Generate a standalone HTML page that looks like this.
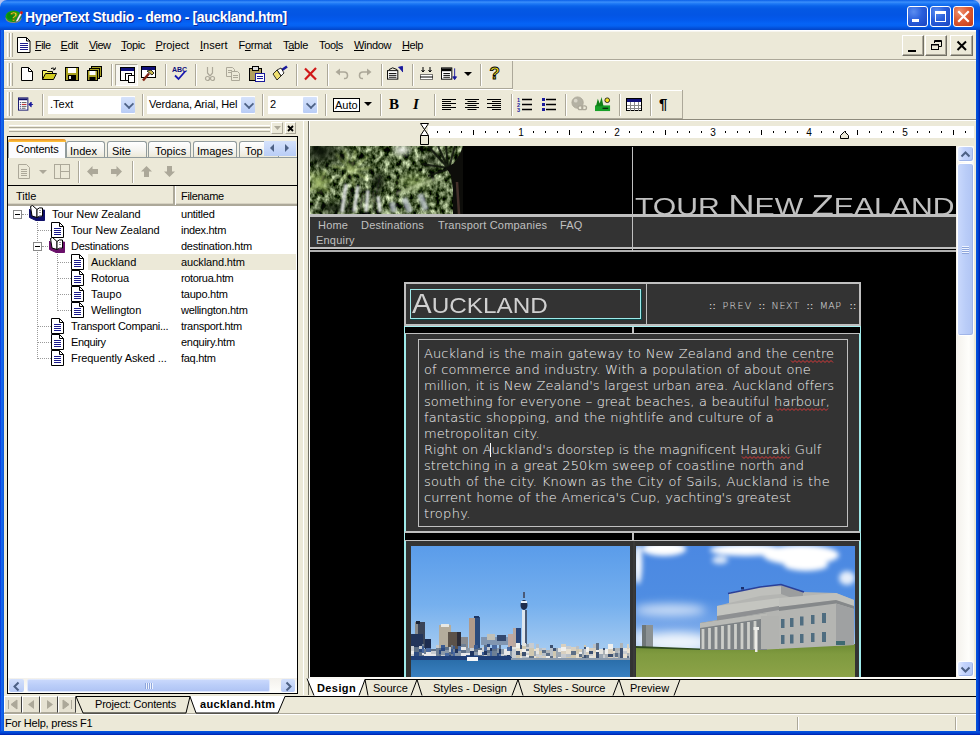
<!DOCTYPE html>
<html lang="en">
<head>
<meta charset="utf-8">
<title>HyperText Studio - demo - [auckland.htm]</title>
<style>
*{box-sizing:border-box;margin:0;padding:0}
html,body{width:980px;height:735px;overflow:hidden;background:#ece9d8}
body{position:relative;font:11px "Liberation Sans",sans-serif;color:#000}
#win{position:absolute;left:0;top:0;width:980px;height:735px;overflow:hidden;background:#ece9d8}
#win div,#win span,#win svg,#win i,#win b{position:absolute;white-space:nowrap}
#win u{text-decoration:underline;text-underline-offset:1px}
svg{overflow:visible}
/* title bar */
#title{left:0;top:0;width:980px;height:30px;border-radius:7px 7px 0 0;
background:linear-gradient(to bottom,#0a5fe8 0%,#3b8ffb 7%,#1f7af6 12%,#0a63ea 20%,#0458e4 30%,#0355e4 50%,#0359ec 65%,#0563f6 78%,#0562f2 86%,#0352dd 93%,#0345c6 100%)}
#title .txt{left:25px;top:9px;font:bold 14px/16px "Liberation Sans",sans-serif;color:#fff;letter-spacing:-.37px;text-shadow:1px 1px 0 #0a2a9a}
#bl{left:0;top:30px;width:4px;height:705px;background:linear-gradient(to right,#0831d9,#166aee 40%,#0855dd)}
#br{left:976px;top:30px;width:4px;height:705px;background:linear-gradient(to right,#0855dd,#0046d5 50%,#001dab)}
#bb{left:0;top:731px;width:980px;height:4px;background:linear-gradient(to bottom,#0855dd,#0046d5 50%,#001dab)}
.cb{top:6px;width:21px;height:21px;border:1px solid #fff;border-radius:3px;background:radial-gradient(circle at 30% 25%,#5b8df0,#2a5fdc 45%,#1a44c0 100%)}
.cb.x{background:radial-gradient(circle at 30% 25%,#f0926f,#dd5a33 45%,#c23a17 100%)}
/* generic chrome */
.grip{width:6px;background:linear-gradient(to right,#fff 0 1px,#ece9d8 1px 2px,#aca899 2px 3px,#fff 3px 4px,#ece9d8 4px 5px,#aca899 5px 6px)}
.hl{height:2px;border-top:1px solid #aca899;border-bottom:1px solid #fff}
.vs{width:2px;border-left:1px solid #aca899;border-right:1px solid #fff}
.m{top:39px;font:11px/13px "Liberation Sans",sans-serif}
.mb{top:35px;width:22px;height:21px;background:#ece9d8;border:1px solid;border-color:#fff #716f64 #716f64 #fff;box-shadow:inset -1px -1px 0 #aca899}
.ic{width:16px;height:16px}
.combo{background:#fff;height:18px;top:96px}
.combo span{left:2px;top:2px;font:11px/13px "Liberation Sans",sans-serif}
.dd{width:14px;height:16px;top:1px;background:linear-gradient(to bottom,#d5e2fb,#b9cdf6);border-radius:1px}
.dd:after{content:"";position:absolute;left:4px;top:3px;width:6px;height:6px;border-right:2px solid #4d6185;border-bottom:2px solid #4d6185;transform:rotate(45deg) scale(.9);transform-origin:50% 50%}
</style>
</head>
<body>
<div id="win">
<div style="left:0;top:0;width:8px;height:8px;background:#b4c2f0"></div><div style="left:972px;top:0;width:8px;height:8px;background:#b4c2f0"></div>
<div id="title">
<svg style="left:5px;top:9px" width="19" height="15" viewBox="0 0 19 15"><ellipse cx="8.500" cy="9.500" rx="8" ry="4.600" fill="#8a8c7a"/><ellipse cx="8.500" cy="7.300" rx="8" ry="5.800" fill="#14a014"/><ellipse cx="5" cy="7" rx="3" ry="3.500" fill="#0a8a10"/><text x="4.500" y="12" font-family="Liberation Sans,sans-serif" font-weight="bold" font-size="13" fill="#f4f030" stroke="#4a4a00" stroke-width=".5">?</text><path d="M11 11.500L16 2L18 3.200L13 12.500L10.500 13Z" fill="#f4f4f4" stroke="#333" stroke-width=".5"/><path d="M14.800 4.300L16 2L18 3.200L16.700 5.500Z" fill="#d21414"/></svg>
<span class="txt">HyperText Studio - demo - [auckland.htm]</span>
<div class="cb" style="left:907px"><div style="left:4px;top:12px;width:7px;height:3px;background:#fff"></div></div>
<div class="cb" style="left:930px"><div style="left:4px;top:4px;width:11px;height:11px;border:1px solid #fff;border-top-width:3px"></div></div>
<div class="cb x" style="left:953px"><svg style="left:0;top:0" width="19" height="19"><path d="M5 5L14 14M14 5L5 14" stroke="#fff" stroke-width="2.2" stroke-linecap="square"/></svg></div>
</div>
<div id="bl"></div><div id="br"></div><div id="bb"></div>
<!-- menu bar -->
<div style="left:4px;top:30px;width:972px;height:1px;background:#fff"></div><div style="left:4px;top:31px;width:972px;height:1px;background:#f7f5ee"></div>
<div class="grip" style="left:7px;top:33px;height:24px"></div>
<svg style="left:17px;top:37px" width="14" height="16" viewBox="0 0 14 16"><path d="M.5 .5H9.5L13 4V15.5H.5Z" fill="#fff" stroke="#000"/><path d="M9.5 .5V4H13" fill="none" stroke="#000"/><path d="M3 6.5H11M3 8.5H11M3 10.5H11M3 12.5H11" stroke="#1a1a8c"/></svg>
<span class="m" style="left:35px;letter-spacing:-0.56px"><u>F</u>ile</span>
<span class="m" style="left:60.5px;letter-spacing:-0.37px"><u>E</u>dit</span>
<span class="m" style="left:89px;letter-spacing:-0.59px"><u>V</u>iew</span>
<span class="m" style="left:121px;letter-spacing:-0.34px"><u>T</u>opic</span>
<span class="m" style="left:155.5px;letter-spacing:-0.11px"><u>P</u>roject</span>
<span class="m" style="left:200px;letter-spacing:-0.00px"><u>I</u>nsert</span>
<span class="m" style="left:238.5px;letter-spacing:-0.31px">F<u>o</u>rmat</span>
<span class="m" style="left:283px;letter-spacing:-0.26px">T<u>a</u>ble</span>
<span class="m" style="left:319px;letter-spacing:-0.34px">Too<u>l</u>s</span>
<span class="m" style="left:354px;letter-spacing:-0.35px"><u>W</u>indow</span>
<span class="m" style="left:402px;letter-spacing:-0.46px"><u>H</u>elp</span>
<div class="mb" style="left:902px"><div style="left:5px;top:14px;width:8px;height:2px;background:#000"></div></div>
<div class="mb" style="left:925px"><svg style="left:5px;top:4px" width="12" height="11"><path d="M3.5 3V.5H10.5V6.5H8" fill="none" stroke="#000"/><path d="M3 1.5H11" stroke="#000"/><rect x=".5" y="4.5" width="7" height="5" fill="none" stroke="#000"/><path d="M0 5H8" stroke="#000"/></svg></div>
<div class="mb" style="left:950px;width:23px"><svg style="left:5px;top:4px" width="12" height="11"><path d="M1.5 1.5L10 10M10 1.5L1.5 10" stroke="#000" stroke-width="2"/></svg></div>
<div class="hl" style="left:4px;top:59px;width:972px"></div>
<!-- toolbar 1 -->
<div class="grip" style="left:7px;top:63px;height:23px"></div>
<div style="left:4px;top:88px;width:509px;height:1px;background:#aca899"></div>
<div style="left:512px;top:61px;width:1px;height:28px;background:#aca899"></div>
<div style="left:4px;top:89px;width:509px;height:1px;background:#fff"></div>
<div style="left:513px;top:90px;width:170px;height:1px;background:#fff"></div>
<div style="left:4px;top:118px;width:679px;height:1px;background:#aca899"></div>
<div style="left:682px;top:90px;width:1px;height:29px;background:#aca899"></div>
<div style="left:4px;top:119px;width:972px;height:1px;background:#8d8a7c"></div>
<div style="left:4px;top:120px;width:972px;height:1px;background:#fff"></div>
<div id="tb1" style="left:0;top:0">
<!-- new -->
<svg class="ic" style="left:20px;top:66px" viewBox="0 0 16 16"><path d="M1.5 1.5H8.5L12.5 5.5V14.5H1.5Z" fill="#fff" stroke="#000"/><path d="M8.5 1.5V5.5H12.5" fill="none" stroke="#000"/></svg>
<!-- open -->
<svg class="ic" style="left:41px;top:66px" viewBox="0 0 16 16"><path d="M1.5 13.500V4.500H5.500L6.500 5.500H11.500V7.500" fill="#f0f060" stroke="#000"/><path d="M1.5 13.5L4.500 7.500H15.500L12.500 13.500Z" fill="#d0cc20" stroke="#000"/><path d="M10 2.500Q12.500 1 14 3.500M14 3.500L14.500 1.500M14 3.500L12 3.800" fill="none" stroke="#000"/></svg>
<!-- save -->
<svg class="ic" style="left:64px;top:66px" viewBox="0 0 16 16"><rect x="1.500" y="1.500" width="13" height="13" fill="#a8a020" stroke="#000"/><rect x="4" y="2" width="8" height="5" fill="#fff"/><rect x="4" y="9" width="8" height="5" fill="#000"/><rect x="5" y="10" width="2" height="3" fill="#ddd"/></svg>
<!-- save all -->
<svg class="ic" style="left:86px;top:66px" viewBox="0 0 16 16"><rect x="5.500" y=".5" width="10" height="10" fill="#a8a020" stroke="#000"/><rect x="3.500" y="2.500" width="10" height="10" fill="#a8a020" stroke="#000"/><rect x="1.500" y="4.500" width="10" height="10" fill="#a8a020" stroke="#000"/><rect x="3.500" y="5" width="6" height="4" fill="#fff"/><rect x="3.500" y="11" width="6" height="3" fill="#000"/></svg>
<div class="vs" style="left:111px;top:64px;height:22px"></div>
<!-- pressed button -->
<div style="left:115px;top:64px;width:23px;height:22px;background:#f7f6f1;border:1px solid;border-color:#aca899 #fff #fff #aca899"></div>
<svg class="ic" style="left:120px;top:67px" viewBox="0 0 16 16"><rect x=".5" y=".5" width="14" height="13" fill="#fff" stroke="#000"/><rect x="1" y="1" width="13" height="3" fill="#10107a"/><rect x="5.500" y="6.500" width="6" height="7" fill="#fff" stroke="#000"/><rect x="8.500" y="8.500" width="6" height="7" fill="#fff" stroke="#000"/></svg>
<!-- build -->
<svg class="ic" style="left:141px;top:66px" viewBox="0 0 16 16"><rect x=".5" y=".5" width="14" height="11" fill="#fff" stroke="#000"/><rect x="1" y="1" width="13" height="3" fill="#10107a"/><path d="M2 14.500L8 7.500" stroke="#802010" stroke-width="2.400"/><path d="M6 5L10 4L13 7L11 9Z" fill="#c8b850" stroke="#000" stroke-width=".8"/></svg>
<div class="vs" style="left:165px;top:64px;height:22px"></div>
<!-- spell -->
<svg class="ic" style="left:172px;top:65px" viewBox="0 0 16 16"><text x="0" y="7" font-family="Liberation Sans,sans-serif" font-size="7" font-weight="bold" fill="#10107a">ABC</text><path d="M3 10.500L6.500 14L13.500 6" fill="none" stroke="#1818b0" stroke-width="1.800"/></svg>
<div class="vs" style="left:195px;top:64px;height:22px"></div>
<!-- cut (disabled) -->
<svg class="ic" style="left:202px;top:66px" viewBox="0 0 16 16"><path d="M5.500 1V7L8 10M10.500 1V7L8 10" fill="none" stroke="#aca899" stroke-width="1.200"/><circle cx="5.500" cy="12.500" r="2" fill="none" stroke="#aca899" stroke-width="1.200"/><circle cx="10.500" cy="12.500" r="2" fill="none" stroke="#aca899" stroke-width="1.200"/></svg>
<!-- copy (disabled) -->
<svg class="ic" style="left:225px;top:66px" viewBox="0 0 16 16"><path d="M1.500 1.500H7.500L9.500 3.500V10.500H1.500Z" fill="#ece9d8" stroke="#aca899"/><path d="M6.500 5.500H12.500L14.500 7.500V14.500H6.500Z" fill="#ece9d8" stroke="#aca899"/><path d="M3 4.500H7M3 6.500H6M8 9.500H13M8 11.500H13" stroke="#aca899"/></svg>
<!-- paste -->
<svg class="ic" style="left:249px;top:66px" viewBox="0 0 16 16"><rect x=".5" y="2.500" width="12" height="12" fill="#b0a060" stroke="#000"/><rect x="3.500" y=".5" width="6" height="4" fill="#ddd" stroke="#000"/><rect x="6.500" y="7.500" width="9" height="8" fill="#fff" stroke="#1a1a9c"/><path d="M8 10.500H14M8 12.500H14" stroke="#1a1a9c"/></svg>
<!-- format painter -->
<svg class="ic" style="left:272px;top:66px" viewBox="0 0 16 16"><path d="M10 4L15 .5" stroke="#1a1a9c" stroke-width="2.600"/><path d="M5 4L9 2L12 7L9 10Z" fill="#fff" stroke="#000" stroke-width=".8"/><path d="M1 8L5 4L9 10L5 14Z" fill="#f0e070" stroke="#000" stroke-width=".8"/></svg>
<div class="vs" style="left:296px;top:64px;height:22px"></div>
<!-- delete -->
<svg class="ic" style="left:303px;top:66px" viewBox="0 0 16 16"><path d="M2 2.500L13 13.500M13 2L2 13.500" stroke="#d01818" stroke-width="2.200"/></svg>
<div class="vs" style="left:327px;top:64px;height:22px"></div>
<!-- undo/redo disabled -->
<svg class="ic" style="left:334px;top:66px" viewBox="0 0 16 16"><path d="M3 6H10Q13.500 6 13.500 9.500T10 12.500" fill="none" stroke="#aca899" stroke-width="1.600"/><path d="M1.500 6L6 2.500V9.500Z" fill="#aca899"/></svg>
<svg class="ic" style="left:357px;top:66px" viewBox="0 0 16 16"><path d="M13 6H6Q2.500 6 2.500 9.500T6 12.500" fill="none" stroke="#aca899" stroke-width="1.600"/><path d="M14.500 6L10 2.500V9.500Z" fill="#aca899"/></svg>
<div class="vs" style="left:381px;top:64px;height:22px"></div>
<!-- properties -->
<svg class="ic" style="left:387px;top:65px" viewBox="0 0 17 16"><rect x=".5" y="5.500" width="11" height="9" fill="#fff" stroke="#000"/><path d="M2 4.500L6 2.500L11 4.500" fill="none" stroke="#000"/><path d="M2 8.500H10M2 10.500H10M2 12.500H10" stroke="#000"/><path d="M12 2L16.500 1V7" fill="#1a1a9c" stroke="#1a1a9c"/></svg>
<div class="vs" style="left:412px;top:64px;height:22px"></div>
<svg class="ic" style="left:419px;top:66px" viewBox="0 0 16 16"><path d="M4 1V6M4 6L2.500 4M4 6L5.500 4M11 1V6M11 6L9.500 4M11 6L12.500 4" stroke="#000" fill="none"/><rect x="1.500" y="8.500" width="12" height="5" fill="#fff" stroke="#000" stroke-dasharray="1 1"/><path d="M1 11H14" stroke="#000"/></svg>
<svg class="ic" style="left:441px;top:66px" viewBox="0 0 17 16"><rect x=".5" y="1.500" width="11" height="12" fill="#fff" stroke="#000"/><rect x="1" y="2" width="10" height="3" fill="#000"/><path d="M2.500 7.500H9.500M2.500 9.500H9.500M2.500 11.500H9.500" stroke="#000"/><path d="M14.500 2V13M14.500 14L12.500 11H16.500Z" stroke="#1a1a9c" fill="#1a1a9c"/></svg>
<svg style="left:464px;top:72px" width="8" height="5"><path d="M0 0H8L4 4Z" fill="#000"/></svg>
<div class="vs" style="left:480px;top:64px;height:22px"></div>
<!-- help -->
<svg class="ic" style="left:487px;top:65px" viewBox="0 0 16 16"><text x="2.500" y="14" font-family="Liberation Sans,sans-serif" font-size="17" font-weight="bold" fill="#f0e020" stroke="#000" stroke-width=".9">?</text></svg>
</div>
<!-- toolbar 2 -->
<div class="grip" style="left:7px;top:92px;height:24px"></div>
<svg class="ic" style="left:18px;top:96px" viewBox="0 0 17 16"><rect x=".5" y="1.500" width="10" height="13" fill="#fff" stroke="#10106a"/><rect x="1" y="2" width="9" height="2" fill="#10106a"/><path d="M2 6.500H3M2 8.500H3M2 10.500H3M2 12.500H3" stroke="#10106a"/><path d="M4 6.500H9M4 10.500H9M4 12.500H8" stroke="#555"/><path d="M4 8.500H9" stroke="#c02020"/><path d="M16 8.500H12M11.500 8.500L14 6V11Z" stroke="#1a1a9c" fill="#1a1a9c"/></svg>
<div class="vs" style="left:42px;top:94px;height:22px"></div>
<div class="combo" style="left:48px;width:87px"><span>.Text</span><div class="dd" style="left:73px"></div></div>
<div class="vs" style="left:142px;top:94px;height:22px"></div>
<div class="combo" style="left:147px;width:108px"><span style="letter-spacing:-.15px">Verdana, Arial, Hel</span><div class="dd" style="left:94px"></div></div>
<div class="vs" style="left:262px;top:94px;height:22px"></div>
<div class="combo" style="left:268px;width:50px"><span>2</span><div class="dd" style="left:35px"></div></div>
<div class="vs" style="left:325px;top:94px;height:22px"></div>
<div style="left:333px;top:98px;width:27px;height:14px;border:1px solid #000;background:#fff"><span style="left:1px;top:0;font:11px/13px 'Liberation Sans',sans-serif">Auto</span></div>
<svg style="left:364px;top:102px" width="8" height="5"><path d="M0 0H8L4 4Z" fill="#000"/></svg>
<div class="vs" style="left:380px;top:94px;height:22px"></div>
<span style="left:389px;top:96px;font:bold 15px/17px 'Liberation Serif',serif">B</span>
<span style="left:413px;top:96px;font:italic bold 15px/17px 'Liberation Serif',serif">I</span>
<div class="vs" style="left:434px;top:94px;height:22px"></div>
<svg class="ic" style="left:442px;top:97px" viewBox="0 0 16 16"><path d="M0 2.500H14M0 4.500H9M0 6.500H14M0 8.500H9M0 10.500H14M0 12.500H9" stroke="#000"/></svg>
<svg class="ic" style="left:465px;top:97px" viewBox="0 0 16 16"><path d="M0 2.500H14M2.500 4.500H11.500M0 6.500H14M2.500 8.500H11.500M0 10.500H14M2.500 12.500H11.500" stroke="#000"/></svg>
<svg class="ic" style="left:487px;top:97px" viewBox="0 0 16 16"><path d="M0 2.500H14M5 4.500H14M0 6.500H14M5 8.500H14M0 10.500H14M5 12.500H14" stroke="#000"/></svg>
<div class="vs" style="left:511px;top:94px;height:22px"></div>
<svg class="ic" style="left:517px;top:97px" viewBox="0 0 16 16"><path d="M5 2.500H15M5 7.500H15M5 12.500H15" stroke="#000" stroke-width="1.400"/><text x="0" y="5" font-family="Liberation Sans,sans-serif" font-size="5.500" font-weight="bold" fill="#1a1a9c">1</text><text x="0" y="10" font-family="Liberation Sans,sans-serif" font-size="5.500" font-weight="bold" fill="#1a1a9c">2</text><text x="0" y="15" font-family="Liberation Sans,sans-serif" font-size="5.500" font-weight="bold" fill="#1a1a9c">3</text></svg>
<svg class="ic" style="left:541px;top:97px" viewBox="0 0 16 16"><path d="M5 2.500H15M5 7.500H15M5 12.500H15" stroke="#000" stroke-width="1.400"/><rect x="1" y="1" width="3" height="3" fill="#1a1a9c"/><rect x="1" y="6" width="3" height="3" fill="#1a1a9c"/><rect x="1" y="11" width="3" height="3" fill="#1a1a9c"/></svg>
<div class="vs" style="left:565px;top:94px;height:22px"></div>
<svg class="ic" style="left:571px;top:96px" viewBox="0 0 17 17"><circle cx="7" cy="7" r="6" fill="#b4b1a3" stroke="#aca899"/><circle cx="5" cy="5" r="2" fill="#d8d5c8"/><rect x="7.500" y="10.500" width="5" height="4" rx="2" fill="#ece9d8" stroke="#aca899" stroke-width="1.400"/><rect x="11.500" y="10.500" width="5" height="4" rx="2" fill="none" stroke="#aca899" stroke-width="1.400"/></svg>
<svg class="ic" style="left:595px;top:96px" viewBox="0 0 17 17"><rect x="0" y="10" width="16" height="6" fill="#18a028"/><path d="M1 11L3 3L5 8L7 1L9 11Z" fill="#108018"/><circle cx="13" cy="4.500" r="2.500" fill="#f0e020" stroke="#000" stroke-width=".8"/><path d="M8 13H14" stroke="#000"/></svg>
<div class="vs" style="left:619px;top:94px;height:22px"></div>
<svg class="ic" style="left:626px;top:97px" viewBox="0 0 16 16"><rect x=".5" y="1.500" width="15" height="12" fill="#fff" stroke="#000"/><rect x="1" y="2" width="14" height="3" fill="#10107a"/><path d="M1 8.500H15M1 11.500H15M4.500 5V14M8.500 5V14M12.500 5V14" stroke="#888"/></svg>
<div class="vs" style="left:650px;top:94px;height:22px"></div>
<span style="left:659px;top:95px;font:bold 15px/18px 'Liberation Sans',sans-serif">¶</span>
<!-- left panel -->
<style>
.tab{top:141px;height:16px;background:linear-gradient(to bottom,#fff,#f4f3ee 60%,#ece9d8);border:1px solid #919b9c;border-bottom:0;border-radius:3px 3px 0 0;font:11px/13px "Liberation Sans",sans-serif;padding:3px 0 0 3px}
.tr{left:8px;width:289px;height:16px;font:11px/13px "Liberation Sans",sans-serif}
.tr span{top:2px}
.tr .f{left:173px}
.doc{width:13px;height:15px;top:0}
.dot{border-top:1px dotted #9a9a9a;height:1px}
.dotv{border-left:1px dotted #9a9a9a;width:1px}
</style>
<div style="left:9px;top:125px;width:261px;height:3px;border-top:1px solid #fff;border-bottom:1px solid #aca899"></div>
<div style="left:9px;top:129px;width:261px;height:3px;border-top:1px solid #fff;border-bottom:1px solid #aca899"></div>
<div style="left:271px;top:122px;width:12px;height:12px;border:1px solid;border-color:#fff #aca899 #aca899 #fff"><svg style="left:2px;top:3px" width="7" height="4"><path d="M0 0H7L3.500 4Z" fill="#aca899"/></svg></div>
<div style="left:285px;top:122px;width:11px;height:12px;border:1px solid;border-color:#fff #aca899 #aca899 #fff"><svg style="left:1px;top:2px" width="7" height="7"><path d="M1 1L6 6M6 1L1 6" stroke="#000" stroke-width="1.800"/></svg></div>
<div style="left:7px;top:136px;width:291px;height:558px;border:1px solid #000;background:#ece9d8"></div>
<div style="left:303px;top:121px;width:1px;height:574px;background:#fff"></div>
<div style="left:8px;top:137px;width:289px;height:21px;background:#f1efe2"></div>
<div style="left:8px;top:157px;width:289px;height:1px;background:#919b9c"></div>
<div class="tab" style="left:66px;width:39px">Index</div>
<div class="tab" style="left:107px;width:40px;padding-left:4px">Site</div>
<div class="tab" style="left:148px;width:43px;padding-left:6px">Topics</div>
<div class="tab" style="left:193px;width:44px">Images</div>
<div class="tab" style="left:239px;width:40px;padding-left:5px">Top</div>
<div class="tab" style="left:8px;top:139px;width:58px;height:19px;background:#fcfcfe;padding:4px 0 0 7px;border-top:0;letter-spacing:-.2px"><div style="left:-1px;top:0;width:58px;height:3px;background:linear-gradient(to bottom,#e68b2c,#ffc73c);border-radius:3px 3px 0 0"></div>Contents</div>
<div style="left:264px;top:141px;width:32px;height:15px;background:linear-gradient(to bottom,#d5e2fb,#b9cdf6)"><svg style="left:6px;top:3px" width="22" height="9"><path d="M4 0V8L0 4ZM15 0V8L19 4Z" fill="#4d6185"/></svg></div>
<!-- panel toolbar -->
<div style="left:8px;top:159px;width:289px;height:26px;background:#ece9d8"></div>
<svg style="left:18px;top:164px" width="13" height="15" viewBox="0 0 13 15"><path d="M.5 .5H8.500L11.500 3.500V14.500H.5Z" fill="#ece9d8" stroke="#aca899"/><path d="M3 5.500H9M3 7.500H9M3 9.500H9M3 11.500H9" stroke="#aca899"/></svg>
<svg style="left:39px;top:170px" width="8" height="5"><path d="M0 0H8L4 4Z" fill="#aca899"/></svg>
<svg style="left:54px;top:164px" width="17" height="15"><rect x=".5" y=".5" width="15" height="14" fill="#ece9d8" stroke="#aca899"/><path d="M6.500 0V15M6.500 7.500H16" stroke="#aca899"/></svg>
<div class="vs" style="left:78px;top:161px;height:22px"></div>
<svg style="left:87px;top:166px" width="11" height="11"><path d="M0 5.500L5.500 0V3H11V8H5.500V11Z" fill="#aca899"/></svg>
<svg style="left:111px;top:166px" width="11" height="11"><path d="M11 5.500L5.500 0V3H0V8H5.500V11Z" fill="#aca899"/></svg>
<div class="vs" style="left:132px;top:161px;height:22px"></div>
<svg style="left:141px;top:166px" width="11" height="11"><path d="M5.500 0L0 5.500H3V11H8V5.500H11Z" fill="#aca899"/></svg>
<svg style="left:164px;top:166px" width="11" height="11"><path d="M5.500 11L0 5.500H3V0H8V5.500H11Z" fill="#aca899"/></svg>
<div style="left:8px;top:185px;width:289px;height:1px;background:#000"></div>
<!-- header -->
<div style="left:8px;top:186px;width:289px;height:20px;background:#ece9d8;border-bottom:2px solid #aca899;box-shadow:inset 0 -1px 0 #d6d2c2"></div>
<div style="left:173px;top:186px;width:3px;height:19px;border-left:2px solid #aca899;border-right:1px solid #fff"></div>
<span style="left:16px;top:190px;font:11px/13px 'Liberation Sans',sans-serif">Title</span>
<span style="left:181px;top:190px;font:11px/13px 'Liberation Sans',sans-serif;letter-spacing:-.3px">Filename</span>
<!-- tree -->
<div style="left:8px;top:206px;width:289px;height:472px;background:#fff"></div>
<div style="left:88px;top:254px;width:208px;height:16px;background:#ece9d8"></div>
<div class="dotv" style="left:37px;top:222px;height:137px"></div>
<div class="dotv" style="left:57px;top:254px;height:57px"></div>
<div class="dot" style="left:22px;top:214px;width:8px"></div>
<div class="dot" style="left:37px;top:230px;width:14px"></div>
<div class="dot" style="left:42px;top:246px;width:8px"></div>
<div class="dot" style="left:57px;top:262px;width:14px"></div>
<div class="dot" style="left:57px;top:278px;width:14px"></div>
<div class="dot" style="left:57px;top:294px;width:14px"></div>
<div class="dot" style="left:57px;top:310px;width:14px"></div>
<div class="dot" style="left:37px;top:326px;width:14px"></div>
<div class="dot" style="left:37px;top:342px;width:14px"></div>
<div class="dot" style="left:37px;top:358px;width:14px"></div>
<svg width="0" height="0"><defs>
<g id="doc"><path d="M.5 .5H8.500L12.500 4.500V15.500H.5Z" fill="#fff" stroke="#000"/><path d="M8.500 .5V4.500H12.500" fill="none" stroke="#000"/><path d="M3 6.500H10M3 8.500H10M3 10.500H10M3 12.500H10" stroke="#1a1a8c"/></g>
<g id="book"><path d="M.5 4V12.500L7 15.500H15.500V5H13V12H8Z" fill="#10106a" stroke="#10106a" stroke-linejoin="round"/><path d="M1.500 1.500L3.500 .5L8 4.500V12.500L3 11Z" fill="#fff" stroke="#000" stroke-linejoin="round"/><path d="M8 4.500Q10 2 13.500 3V11Q10.500 10.500 8 12.500Z" fill="#fff" stroke="#000" stroke-linejoin="round"/><path d="M10 5.500H12M10 7.500H12" stroke="#999"/></g>
<g id="book2"><path d="M.5 4V12.500L7 15.500H15.500V5H13V12H8Z" fill="#6a106a" stroke="#6a106a" stroke-linejoin="round"/><path d="M1.500 1.500L3.500 .5L8 4.500V12.500L3 11Z" fill="#fff" stroke="#000" stroke-linejoin="round"/><path d="M8 4.500Q10 2 13.500 3V11Q10.500 10.500 8 12.500Z" fill="#fff" stroke="#000" stroke-linejoin="round"/><path d="M10 5.500H12M10 7.500H12" stroke="#999"/></g>
<g id="pm"><rect x=".5" y=".5" width="8" height="8" fill="#fff" stroke="#8a8a8a"/><path d="M2 4.500H7" stroke="#000"/></g>
</defs></svg>
<svg style="left:13px;top:210px" width="9" height="9"><use href="#pm"/></svg>
<svg style="left:33px;top:242px" width="9" height="9"><use href="#pm"/></svg>
<svg style="left:29px;top:205px" width="16" height="16"><use href="#book"/></svg>
<svg style="left:49px;top:237px" width="16" height="16"><use href="#book2"/></svg>
<svg style="left:51px;top:222px" width="13" height="16"><use href="#doc"/></svg>
<svg style="left:71px;top:254px" width="13" height="16"><use href="#doc"/></svg>
<svg style="left:71px;top:270px" width="13" height="16"><use href="#doc"/></svg>
<svg style="left:71px;top:286px" width="13" height="16"><use href="#doc"/></svg>
<svg style="left:71px;top:302px" width="13" height="16"><use href="#doc"/></svg>
<svg style="left:51px;top:318px" width="13" height="16"><use href="#doc"/></svg>
<svg style="left:51px;top:334px" width="13" height="16"><use href="#doc"/></svg>
<svg style="left:51px;top:350px" width="13" height="16"><use href="#doc"/></svg>
<div class="tr" style="top:206px"><span style="left:44px;letter-spacing:-0.04px">Tour New Zealand</span><span class="f" style="letter-spacing:-0.24px">untitled</span></div>
<div class="tr" style="top:222px"><span style="left:63px;letter-spacing:-0.04px">Tour New Zealand</span><span class="f" style="letter-spacing:-0.30px">index.htm</span></div>
<div class="tr" style="top:238px"><span style="left:63px;letter-spacing:-0.24px">Destinations</span><span class="f" style="letter-spacing:-0.25px">destination.htm</span></div>
<div class="tr" style="top:254px"><span style="left:83px;letter-spacing:0.00px">Auckland</span><span class="f" style="letter-spacing:-0.14px">auckland.htm</span></div>
<div class="tr" style="top:270px"><span style="left:83px;letter-spacing:-0.18px">Rotorua</span><span class="f" style="letter-spacing:-0.35px">rotorua.htm</span></div>
<div class="tr" style="top:286px"><span style="left:83px;letter-spacing:0.16px">Taupo</span><span class="f" style="letter-spacing:-0.25px">taupo.htm</span></div>
<div class="tr" style="top:302px"><span style="left:83px;letter-spacing:-0.10px">Wellington</span><span class="f" style="letter-spacing:-0.27px">wellington.htm</span></div>
<div class="tr" style="top:318px"><span style="left:63px;letter-spacing:-0.28px">Transport Compani...</span><span class="f" style="letter-spacing:-0.30px">transport.htm</span></div>
<div class="tr" style="top:334px"><span style="left:63px;letter-spacing:-0.37px">Enquiry</span><span class="f" style="letter-spacing:-0.26px">enquiry.htm</span></div>
<div class="tr" style="top:350px"><span style="left:63px;letter-spacing:-0.07px">Frequently Asked ...</span><span class="f" style="letter-spacing:-0.28px">faq.htm</span></div>
<!-- hscroll -->
<div style="left:8px;top:678px;width:289px;height:15px;background:linear-gradient(to bottom,#f3f1ec,#fefefb)"></div>
<div style="left:9px;top:679px;width:15px;height:13px;background:linear-gradient(to bottom,#d3e0fb,#b7caf5);border-radius:2px"><svg style="left:4px;top:3px" width="7" height="9"><path d="M5.500 .5L1.500 4.500L5.500 8.500" fill="none" stroke="#4d6185" stroke-width="2"/></svg></div>
<div style="left:27px;top:679px;width:243px;height:13px;background:linear-gradient(to bottom,#c9d8fc,#bacdf8 50%,#b0c4f4);border-radius:2px;border:1px solid #dfe8fd"><div style="left:117px;top:3px;width:8px;height:6px;background:repeating-linear-gradient(to right,#8ea6dc 0 1px,#eef3fe 1px 2px)"></div></div>
<div style="left:281px;top:679px;width:14px;height:13px;background:linear-gradient(to bottom,#d3e0fb,#b7caf5);border-radius:2px"><svg style="left:4px;top:3px" width="7" height="9"><path d="M1.500 .5L5.500 4.500L1.500 8.500" fill="none" stroke="#4d6185" stroke-width="2"/></svg></div>
<!-- editor -->
<style>
#ed{left:308px;top:121px;width:668px;height:575px;background:#ece9d8}
#page{left:2px;top:26px;width:646px;height:530px;background:#000;overflow:hidden}
.nv{font:11px/13px "Liberation Sans",sans-serif;color:#c0c0c0;letter-spacing:.2px}
.bt{left:114px;font:200 13px/16px "DejaVu Sans",sans-serif;color:#f4f4f4;word-spacing:.44px;margin-top:1px}
.hd{font-family:"Liberation Sans",sans-serif;font-weight:400;color:#c0c0c0;transform-origin:0 0}
#win .hd b{position:static;font-weight:400;font-size:1.212em}
.wv{height:3px;background:repeating-linear-gradient(135deg,#d02020 0 1px,transparent 1px 2px),repeating-linear-gradient(45deg,#d02020 0 1px,transparent 1px 2px);background-size:4px 3px}
.pn{top:153px;font:200 9.500px/12px "DejaVu Sans",sans-serif;color:#e8e8e8}
.et{top:561px;font:11px/13px "Liberation Sans",sans-serif}
</style>
<div id="ed">
<div style="left:0;top:0;width:1px;height:574px;background:#716f64"></div>
<div style="left:1px;top:0;width:1px;height:557px;background:#fff"></div>
<!-- ruler -->
<div style="left:120px;top:5px;width:546px;height:12px;background:#fff"></div>
<svg style="left:0;top:0" width="668" height="26"><g stroke="#000" stroke-width="1" fill="none">
<path d="M129.5 10V12M141.5 10V12M153.5 10V12M177.5 10V12M189.5 10V12M201.5 10V12M225.5 10V12M237.5 10V12M249.5 10V12M273.5 10V12M285.5 10V12M297.5 10V12M321.5 10V12M333.5 10V12M345.5 10V12M369.5 10V12M381.5 10V12M393.5 10V12M417.5 10V12M429.5 10V12M441.5 10V12M465.5 10V12M477.5 10V12M489.5 10V12M513.5 10V12M525.5 10V12M537.5 10V12M561.5 10V12M573.5 10V12M585.5 10V12M609.5 10V12M621.5 10V12M633.5 10V12M657.5 10V12"/>
<path d="M165.5 9V14M261.5 9V14M357.5 9V14M453.5 9V14M549.5 9V14M645.5 9V14"/>
<path d="M112.500 2.500H120.500L112.500 14.500H120.500Z" fill="#fff"/><path d="M112.500 14.500H120.500V23.500H112.500Z" fill="#ece9d8"/>
<path d="M532.500 17.500V14.500L536.500 10.500L540.500 14.500V17.500Z" fill="#ece9d8"/></g>
<g font-family="Liberation Sans,sans-serif" font-size="10" fill="#000" text-anchor="middle"><text x="213" y="15">1</text><text x="309" y="15">2</text><text x="405" y="15">3</text><text x="501" y="15">4</text><text x="597" y="15">5</text></g></svg>
<div style="left:2px;top:25px;width:646px;height:2px;background:#000"></div>
<div id="page">
<!-- header photo placeholder -->

<div style="left:0;top:67px;width:646px;height:3px;background:#c0c0c0"></div>
<div style="left:0;top:70px;width:646px;height:30px;background:#333"></div>
<div style="left:0;top:100px;width:646px;height:2px;background:#c0c0c0"></div>
<div style="left:0;top:103px;width:646px;height:2px;background:#b0b0b0"></div>
<div style="left:322px;top:0;width:1px;height:104px;background:#c0c0c0"></div>
<span class="hd" id="tnz" style="left:325px;top:42px;font-size:24px;line-height:32px;height:32px;transform:scaleX(1.256)">TOUR <b>N</b>EW <b>Z</b>EALAND</span>
<span class="nv" style="left:8px;top:72px">Home</span>
<span class="nv" style="left:51px;top:72px">Destinations</span>
<span class="nv" style="left:128px;top:72px">Transport Companies</span>
<span class="nv" style="left:250px;top:72px">FAQ</span>
<span class="nv" style="left:6px;top:87px">Enquiry</span>
<!-- content table -->
<div style="left:94px;top:135px;width:457px;height:44px;background:#333;border:2px solid #c0c0c0"></div>
<div style="left:336px;top:136px;width:1px;height:42px;background:#c0c0c0"></div>
<div style="left:100px;top:142px;width:231px;height:30px;border:1px solid #9eeaea;box-shadow:1px 1px 0 #0a4a4a"></div>
<span class="hd" id="akl" style="left:102px;top:142px;font-size:22.100px;line-height:30px;height:30px;color:#d0d0d0;transform:scaleX(1.100)"><b>A</b>UCKLAND</span>
<span class="pn" style="left:399.0px;letter-spacing:.3px;font-weight:400">::</span><span class="pn" style="left:412.5px;letter-spacing:1.29px">PREV</span><span class="pn" style="left:448.5px;letter-spacing:.3px;font-weight:400">::</span><span class="pn" style="left:461.6px;letter-spacing:0.71px">NEXT</span><span class="pn" style="left:496.5px;letter-spacing:.3px;font-weight:400">::</span><span class="pn" style="left:509.7px;letter-spacing:0.43px">MAP</span><span class="pn" style="left:539.5px;letter-spacing:.3px;font-weight:400">::</span>
<!-- spacer row -->
<div style="left:94px;top:179px;width:457px;height:8px;border:1px solid #a6eeee;border-bottom-color:#c0c0c0;background:#000"></div>
<div style="left:322px;top:180px;width:2px;height:6px;background:#c0c0c0"></div>
<!-- text cell -->
<div style="left:94px;top:186px;width:457px;height:199px;background:#333;border:2px solid #9eeaea;border-top:1px solid #c0c0c0;border-bottom:1px solid #c0c0c0"></div>
<div style="left:108px;top:192px;width:430px;height:188px;border:1px solid #c0c0c0"></div>
<span class="bt" style="top:198px;letter-spacing:0.060px">Auckland is the main gateway to New Zealand and the centre</span>
<span class="bt" style="top:214px;letter-spacing:0.064px">of commerce and industry. With a population of about one</span>
<span class="bt" style="top:230px;letter-spacing:-0.031px">million, it is New Zealand's largest urban area. Auckland offers</span>
<span class="bt" style="top:246px;letter-spacing:0.036px">something for everyone – great beaches, a beautiful harbour,</span>
<span class="bt" style="top:262px;letter-spacing:0.086px">fantastic shopping, and the nightlife and culture of a</span>
<span class="bt" style="top:278px;letter-spacing:0.105px">metropolitan city.</span>
<span class="bt" style="top:294px;letter-spacing:-0.047px">Right on Auckland's doorstep is the magnificent Hauraki Gulf</span>
<span class="bt" style="top:310px;letter-spacing:0.058px">stretching in a great 250km sweep of coastline north and</span>
<span class="bt" style="top:326px;letter-spacing:0.184px">south of the city. Known as the City of Sails, Auckland is the</span>
<span class="bt" style="top:342px;letter-spacing:0.064px">current home of the America's Cup, yachting's greatest</span>
<span class="bt" style="top:358px;letter-spacing:0.317px">trophy.</span>
<svg style="left:481px;top:213px" width="43" height="3"><path d="M0 0.5L2 2.5L4 0.5L6 2.5L8 0.5L10 2.5L12 0.5L14 2.5L16 0.5L18 2.5L20 0.5L22 2.5L24 0.5L26 2.5L28 0.5L30 2.5L32 0.5L34 2.5L36 0.5L38 2.5L40 0.5L42 2.5" fill="none" stroke="#d83a3a" stroke-width="1"/></svg>
<svg style="left:466px;top:261px" width="52" height="3"><path d="M0 0.5L2 2.5L4 0.5L6 2.5L8 0.5L10 2.5L12 0.5L14 2.5L16 0.5L18 2.5L20 0.5L22 2.5L24 0.5L26 2.5L28 0.5L30 2.5L32 0.5L34 2.5L36 0.5L38 2.5L40 0.5L42 2.5L44 0.5L46 2.5L48 0.5L50 2.5L52 0.5" fill="none" stroke="#d83a3a" stroke-width="1"/></svg>
<svg style="left:432px;top:309px" width="48" height="3"><path d="M0 0.5L2 2.5L4 0.5L6 2.5L8 0.5L10 2.5L12 0.5L14 2.5L16 0.5L18 2.5L20 0.5L22 2.5L24 0.5L26 2.5L28 0.5L30 2.5L32 0.5L34 2.5L36 0.5L38 2.5L40 0.5L42 2.5L44 0.5L46 2.5L48 0.5" fill="none" stroke="#d83a3a" stroke-width="1"/></svg>
<div style="left:180px;top:296px;width:1px;height:14px;background:#fff"></div>
<!-- spacer row 2 -->
<div style="left:94px;top:385px;width:457px;height:9px;border:1px solid #a6eeee;border-top-color:#c0c0c0;border-bottom-color:#c0c0c0;background:#000"></div>
<div style="left:322px;top:386px;width:2px;height:7px;background:#c0c0c0"></div>
<!-- images row -->
<div style="left:94px;top:394px;width:457px;height:140px;background:#333;border-left:2px solid #9eeaea;border-right:2px solid #9eeaea"></div>
<div style="left:323px;top:394px;width:2px;height:140px;background:#3a3a3a"></div>
<svg style="left:101px;top:399px;overflow:hidden" width="219" height="131" viewBox="0 0 219 131" shape-rendering="crispEdges">
<defs><linearGradient id="sk1" x1="0" y1="0" x2="0" y2="1"><stop offset="0" stop-color="#5a9cea"/><stop offset=".45" stop-color="#76b0ee"/><stop offset=".8" stop-color="#a5cbf1"/><stop offset="1" stop-color="#b6d5f3"/></linearGradient>
<linearGradient id="wt" x1="0" y1="0" x2="0" y2="1"><stop offset="0" stop-color="#2a6eaa"/><stop offset="1" stop-color="#3a80c0"/></linearGradient></defs>
<rect width="219" height="131" fill="url(#sk1)"/>
<rect x="4" y="76" width="5" height="26" fill="#8a8c8c"/><rect x="7" y="76" width="7" height="26" fill="#3a4458"/><rect x="5" y="75" width="4" height="3" fill="#1a2438"/>
<rect x="0" y="88" width="12" height="14" fill="#22345a"/><rect x="14" y="93" width="6" height="10" fill="#1c2c50"/>
<rect x="28" y="79" width="12" height="23" fill="#b4ac9c"/><rect x="30" y="78" width="8" height="3" fill="#e8e8e4"/>
<rect x="37" y="86" width="13" height="17" fill="#5c524a"/><rect x="46" y="86" width="4" height="14" fill="#2c2c38"/>
<rect x="50" y="91" width="7" height="12" fill="#8a8c90"/>
<rect x="58" y="72" width="7" height="37" fill="#b09a8a"/><rect x="64" y="71" width="5" height="38" fill="#2a4a7c"/><rect x="63" y="70" width="5" height="2" fill="#1c3564"/>
<rect x="70" y="91" width="30" height="8" fill="#7a8aa0" opacity=".8"/><rect x="76" y="88" width="8" height="6" fill="#c0c0b8"/><rect x="86" y="89" width="9" height="6" fill="#33486e"/>
<rect x="97" y="88" width="5" height="14" fill="#c0a8a0"/><rect x="102" y="82" width="4" height="20" fill="#b8a8a0"/><rect x="105" y="82" width="5" height="20" fill="#27447a"/>
<path d="M113 36L113.800 52H112.200Z" fill="#4a5a78"/><ellipse cx="113" cy="59" rx="3.500" ry="5" fill="#1d2c4c" shape-rendering="auto"/><rect x="110" y="55" width="6" height="2" fill="#e8f0f8"/><rect x="111" y="64" width="2.500" height="40" fill="#dfe6ee"/><rect x="113.500" y="64" width="2" height="40" fill="#4a5a74"/>
<rect x="0" y="100" width="3" height="5" fill="#c8ccd0"/><rect x="0" y="105" width="3" height="3" fill="#e8e8e8"/><rect x="0" y="108" width="3" height="2" fill="#c8ccd0"/><rect x="0" y="110" width="3" height="4" fill="#8a98a8"/><rect x="3" y="101" width="5" height="5" fill="#5d6f86"/><rect x="3" y="106" width="5" height="5" fill="#2c4a80"/><rect x="3" y="111" width="5" height="3" fill="#1f3560"/><rect x="8" y="100" width="3" height="3" fill="#c8ccd0"/><rect x="8" y="103" width="3" height="3" fill="#2c4a80"/><rect x="8" y="106" width="3" height="5" fill="#5d6f86"/><rect x="8" y="111" width="3" height="2" fill="#6e7f94"/><rect x="8" y="113" width="3" height="1" fill="#e8e8e8"/><rect x="11" y="98" width="2" height="2" fill="#6e7f94"/><rect x="11" y="100" width="2" height="3" fill="#3a5a90"/><rect x="11" y="103" width="2" height="4" fill="#4a6aa0"/><rect x="11" y="107" width="2" height="2" fill="#e8e8e8"/><rect x="11" y="109" width="2" height="3" fill="#6e7f94"/><rect x="11" y="112" width="2" height="2" fill="#6e7f94"/><rect x="13" y="103" width="2" height="2" fill="#6e7f94"/><rect x="13" y="105" width="2" height="3" fill="#6e7f94"/><rect x="13" y="108" width="2" height="2" fill="#e8e8e8"/><rect x="13" y="110" width="2" height="4" fill="#e8e8e8"/><rect x="15" y="102" width="5" height="4" fill="#4a6aa0"/><rect x="15" y="106" width="5" height="5" fill="#e8e8e8"/><rect x="15" y="111" width="5" height="3" fill="#2c4a80"/><rect x="20" y="103" width="5" height="2" fill="#5d6f86"/><rect x="20" y="105" width="5" height="3" fill="#c8ccd0"/><rect x="20" y="108" width="5" height="3" fill="#e8e8e8"/><rect x="20" y="111" width="5" height="3" fill="#3a5a90"/><rect x="25" y="99" width="3" height="3" fill="#c8ccd0"/><rect x="25" y="102" width="3" height="3" fill="#6e7f94"/><rect x="25" y="105" width="3" height="5" fill="#6e7f94"/><rect x="25" y="110" width="3" height="3" fill="#2c4a80"/><rect x="25" y="113" width="3" height="1" fill="#e8e8e8"/><rect x="28" y="102" width="2" height="2" fill="#5d6f86"/><rect x="28" y="104" width="2" height="4" fill="#2c4a80"/><rect x="28" y="108" width="2" height="4" fill="#5d6f86"/><rect x="28" y="112" width="2" height="2" fill="#3a5a90"/><rect x="30" y="99" width="4" height="3" fill="#3a5a90"/><rect x="30" y="102" width="4" height="3" fill="#2c4a80"/><rect x="30" y="105" width="4" height="4" fill="#8a98a8"/><rect x="30" y="109" width="4" height="4" fill="#c8ccd0"/><rect x="30" y="113" width="4" height="1" fill="#2c4a80"/><rect x="34" y="101" width="4" height="3" fill="#5d6f86"/><rect x="34" y="104" width="4" height="3" fill="#8a98a8"/><rect x="34" y="107" width="4" height="4" fill="#4a6aa0"/><rect x="34" y="111" width="4" height="3" fill="#5d6f86"/><rect x="38" y="101" width="2" height="5" fill="#c8ccd0"/><rect x="38" y="106" width="2" height="3" fill="#5d6f86"/><rect x="38" y="109" width="2" height="3" fill="#2c4a80"/><rect x="38" y="112" width="2" height="2" fill="#c8ccd0"/><rect x="40" y="99" width="2" height="2" fill="#6e7f94"/><rect x="40" y="101" width="2" height="2" fill="#5d6f86"/><rect x="40" y="103" width="2" height="5" fill="#3a5a90"/><rect x="40" y="108" width="2" height="3" fill="#6e7f94"/><rect x="40" y="111" width="2" height="3" fill="#1f3560"/><rect x="42" y="100" width="2" height="3" fill="#3a5a90"/><rect x="42" y="103" width="2" height="3" fill="#6e7f94"/><rect x="42" y="106" width="2" height="5" fill="#4a6aa0"/><rect x="42" y="111" width="2" height="3" fill="#c8ccd0"/><rect x="44" y="103" width="3" height="4" fill="#1f3560"/><rect x="44" y="107" width="3" height="4" fill="#8a98a8"/><rect x="44" y="111" width="3" height="3" fill="#2c4a80"/><rect x="47" y="100" width="3" height="5" fill="#4a6aa0"/><rect x="47" y="105" width="3" height="3" fill="#8a98a8"/><rect x="47" y="108" width="3" height="5" fill="#8a98a8"/><rect x="47" y="113" width="3" height="1" fill="#2c4a80"/><rect x="50" y="98" width="5" height="3" fill="#6e7f94"/><rect x="50" y="101" width="5" height="3" fill="#e8e8e8"/><rect x="50" y="104" width="5" height="3" fill="#5d6f86"/><rect x="50" y="107" width="5" height="3" fill="#e8e8e8"/><rect x="50" y="110" width="5" height="4" fill="#2c4a80"/><rect x="55" y="102" width="4" height="5" fill="#8a98a8"/><rect x="55" y="107" width="4" height="2" fill="#e8e8e8"/><rect x="55" y="109" width="4" height="4" fill="#3a5a90"/><rect x="55" y="113" width="4" height="1" fill="#5d6f86"/><rect x="59" y="102" width="4" height="3" fill="#c8ccd0"/><rect x="59" y="105" width="4" height="4" fill="#1f3560"/><rect x="59" y="109" width="4" height="2" fill="#1f3560"/><rect x="59" y="111" width="4" height="2" fill="#2c4a80"/><rect x="59" y="113" width="4" height="1" fill="#e8e8e8"/><rect x="63" y="99" width="4" height="4" fill="#3a5a90"/><rect x="63" y="103" width="4" height="3" fill="#5d6f86"/><rect x="63" y="106" width="4" height="3" fill="#8a98a8"/><rect x="63" y="109" width="4" height="5" fill="#4a6aa0"/><rect x="67" y="102" width="4" height="2" fill="#5d6f86"/><rect x="67" y="104" width="4" height="5" fill="#e8e8e8"/><rect x="67" y="109" width="4" height="5" fill="#5d6f86"/><rect x="71" y="101" width="2" height="3" fill="#c8ccd0"/><rect x="71" y="104" width="2" height="2" fill="#c8ccd0"/><rect x="71" y="106" width="2" height="3" fill="#3a5a90"/><rect x="71" y="109" width="2" height="3" fill="#8a98a8"/><rect x="71" y="112" width="2" height="2" fill="#e8e8e8"/><rect x="73" y="99" width="3" height="2" fill="#5d6f86"/><rect x="73" y="101" width="3" height="4" fill="#4a6aa0"/><rect x="73" y="105" width="3" height="4" fill="#1f3560"/><rect x="73" y="109" width="3" height="2" fill="#c8ccd0"/><rect x="73" y="111" width="3" height="3" fill="#5d6f86"/><rect x="76" y="98" width="3" height="3" fill="#2c4a80"/><rect x="76" y="101" width="3" height="3" fill="#c8ccd0"/><rect x="76" y="104" width="3" height="3" fill="#5d6f86"/><rect x="76" y="107" width="3" height="4" fill="#8a98a8"/><rect x="76" y="111" width="3" height="3" fill="#6e7f94"/><rect x="79" y="102" width="2" height="3" fill="#1f3560"/><rect x="79" y="105" width="2" height="5" fill="#4a6aa0"/><rect x="79" y="110" width="2" height="4" fill="#6e7f94"/><rect x="81" y="99" width="5" height="4" fill="#4a6aa0"/><rect x="81" y="103" width="5" height="2" fill="#5d6f86"/><rect x="81" y="105" width="5" height="4" fill="#6e7f94"/><rect x="81" y="109" width="5" height="4" fill="#6e7f94"/><rect x="81" y="113" width="5" height="1" fill="#2c4a80"/><rect x="86" y="102" width="2" height="5" fill="#8a98a8"/><rect x="86" y="107" width="2" height="3" fill="#2c4a80"/><rect x="86" y="110" width="2" height="3" fill="#4a6aa0"/><rect x="86" y="113" width="2" height="1" fill="#8a98a8"/><rect x="88" y="99" width="2" height="4" fill="#5d6f86"/><rect x="88" y="103" width="2" height="5" fill="#1f3560"/><rect x="88" y="108" width="2" height="3" fill="#4a6aa0"/><rect x="88" y="111" width="2" height="2" fill="#e8e8e8"/><rect x="88" y="113" width="2" height="1" fill="#8a98a8"/><rect x="90" y="103" width="3" height="5" fill="#8a98a8"/><rect x="90" y="108" width="3" height="4" fill="#c8ccd0"/><rect x="90" y="112" width="3" height="2" fill="#1f3560"/><rect x="93" y="103" width="3" height="2" fill="#e8e8e8"/><rect x="93" y="105" width="3" height="4" fill="#e8e8e8"/><rect x="93" y="109" width="3" height="5" fill="#8a98a8"/><rect x="96" y="101" width="3" height="4" fill="#4a6aa0"/><rect x="96" y="105" width="3" height="4" fill="#e8e8e8"/><rect x="96" y="109" width="3" height="3" fill="#1f3560"/><rect x="96" y="112" width="3" height="2" fill="#8a98a8"/><rect x="99" y="100" width="2" height="5" fill="#2c4a80"/><rect x="99" y="105" width="2" height="3" fill="#8a98a8"/><rect x="99" y="108" width="2" height="3" fill="#8a98a8"/><rect x="99" y="111" width="2" height="3" fill="#2c4a80"/><rect x="101" y="101" width="4" height="2" fill="#e4e4e0"/><rect x="101" y="103" width="4" height="3" fill="#c8ccd0"/><rect x="101" y="106" width="4" height="3" fill="#c8ccd0"/><rect x="101" y="109" width="4" height="3" fill="#c8ccd0"/><rect x="101" y="112" width="4" height="2" fill="#aeb4b8"/><rect x="105" y="97" width="4" height="5" fill="#f0f0ee"/><rect x="105" y="102" width="4" height="3" fill="#e8e0d0"/><rect x="105" y="105" width="4" height="4" fill="#3c5070"/><rect x="105" y="109" width="4" height="3" fill="#d0c8b0"/><rect x="105" y="112" width="4" height="2" fill="#3c5070"/><rect x="109" y="99" width="2" height="4" fill="#3c5070"/><rect x="109" y="103" width="2" height="4" fill="#e8e0d0"/><rect x="109" y="107" width="2" height="3" fill="#d0c8b0"/><rect x="109" y="110" width="2" height="3" fill="#e8e0d0"/><rect x="109" y="113" width="2" height="1" fill="#5d6f86"/><rect x="111" y="97" width="4" height="3" fill="#e4e4e0"/><rect x="111" y="100" width="4" height="3" fill="#d0c8b0"/><rect x="111" y="103" width="4" height="3" fill="#f0f0ee"/><rect x="111" y="106" width="4" height="4" fill="#3c5070"/><rect x="111" y="110" width="4" height="4" fill="#b8c0c8"/><rect x="115" y="98" width="3" height="3" fill="#9aa6b2"/><rect x="115" y="101" width="3" height="2" fill="#c8ccd0"/><rect x="115" y="103" width="3" height="2" fill="#5d6f86"/><rect x="115" y="105" width="3" height="2" fill="#e4e4e0"/><rect x="115" y="107" width="3" height="2" fill="#c8ccd0"/><rect x="115" y="109" width="3" height="2" fill="#f0f0ee"/><rect x="115" y="111" width="3" height="3" fill="#b8c0c8"/><rect x="118" y="97" width="5" height="5" fill="#c8ccd0"/><rect x="118" y="102" width="5" height="5" fill="#d0c8b0"/><rect x="118" y="107" width="5" height="3" fill="#d0c8b0"/><rect x="118" y="110" width="5" height="3" fill="#5d6f86"/><rect x="118" y="113" width="5" height="1" fill="#9aa6b2"/><rect x="123" y="103" width="2" height="2" fill="#e8e0d0"/><rect x="123" y="105" width="2" height="5" fill="#9aa6b2"/><rect x="123" y="110" width="2" height="2" fill="#e8e0d0"/><rect x="123" y="112" width="2" height="2" fill="#d8d0c0"/><rect x="125" y="98" width="3" height="4" fill="#b8c0c8"/><rect x="125" y="102" width="3" height="3" fill="#e8e0d0"/><rect x="125" y="105" width="3" height="3" fill="#e4e4e0"/><rect x="125" y="108" width="3" height="3" fill="#c8ccd0"/><rect x="125" y="111" width="3" height="2" fill="#d0c8b0"/><rect x="125" y="113" width="3" height="1" fill="#9aa6b2"/><rect x="128" y="102" width="3" height="3" fill="#b8c0c8"/><rect x="128" y="105" width="3" height="4" fill="#d0c8b0"/><rect x="128" y="109" width="3" height="3" fill="#c8ccd0"/><rect x="128" y="112" width="3" height="2" fill="#e8e0d0"/><rect x="131" y="102" width="4" height="2" fill="#c8ccd0"/><rect x="131" y="104" width="4" height="3" fill="#5d6f86"/><rect x="131" y="107" width="4" height="3" fill="#b8c0c8"/><rect x="131" y="110" width="4" height="4" fill="#d8d0c0"/><rect x="135" y="104" width="4" height="3" fill="#aeb4b8"/><rect x="135" y="107" width="4" height="3" fill="#5d6f86"/><rect x="135" y="110" width="4" height="2" fill="#f0f0ee"/><rect x="135" y="112" width="4" height="2" fill="#e8e0d0"/><rect x="139" y="99" width="3" height="3" fill="#3c5070"/><rect x="139" y="102" width="3" height="3" fill="#b8c0c8"/><rect x="139" y="105" width="3" height="5" fill="#b8c0c8"/><rect x="139" y="110" width="3" height="3" fill="#5d6f86"/><rect x="139" y="113" width="3" height="1" fill="#aeb4b8"/><rect x="142" y="102" width="3" height="3" fill="#3c5070"/><rect x="142" y="105" width="3" height="5" fill="#d0c8b0"/><rect x="142" y="110" width="3" height="2" fill="#d8d0c0"/><rect x="142" y="112" width="3" height="2" fill="#5d6f86"/><rect x="145" y="102" width="2" height="5" fill="#9aa6b2"/><rect x="145" y="107" width="2" height="5" fill="#9aa6b2"/><rect x="145" y="112" width="2" height="2" fill="#aeb4b8"/><rect x="147" y="102" width="3" height="4" fill="#e4e4e0"/><rect x="147" y="106" width="3" height="5" fill="#9aa6b2"/><rect x="147" y="111" width="3" height="3" fill="#f0f0ee"/><rect x="150" y="98" width="5" height="3" fill="#d8d0c0"/><rect x="150" y="101" width="5" height="4" fill="#f0f0ee"/><rect x="150" y="105" width="5" height="3" fill="#d8d0c0"/><rect x="150" y="108" width="5" height="4" fill="#c8ccd0"/><rect x="150" y="112" width="5" height="2" fill="#f0f0ee"/><rect x="155" y="100" width="5" height="3" fill="#c8ccd0"/><rect x="155" y="103" width="5" height="3" fill="#e8e0d0"/><rect x="155" y="106" width="5" height="2" fill="#e8e0d0"/><rect x="155" y="108" width="5" height="3" fill="#b8c0c8"/><rect x="155" y="111" width="5" height="3" fill="#d0c8b0"/><rect x="160" y="101" width="5" height="4" fill="#d8d0c0"/><rect x="160" y="105" width="5" height="4" fill="#5d6f86"/><rect x="160" y="109" width="5" height="4" fill="#d0c8b0"/><rect x="160" y="113" width="5" height="1" fill="#9aa6b2"/><rect x="165" y="100" width="3" height="3" fill="#b8c0c8"/><rect x="165" y="103" width="3" height="5" fill="#d0c8b0"/><rect x="165" y="108" width="3" height="5" fill="#e8e0d0"/><rect x="165" y="113" width="3" height="1" fill="#9aa6b2"/><rect x="168" y="103" width="3" height="3" fill="#d8d0c0"/><rect x="168" y="106" width="3" height="2" fill="#f0f0ee"/><rect x="168" y="108" width="3" height="3" fill="#5d6f86"/><rect x="168" y="111" width="3" height="3" fill="#d0c8b0"/><rect x="171" y="103" width="2" height="5" fill="#9aa6b2"/><rect x="171" y="108" width="2" height="3" fill="#aeb4b8"/><rect x="171" y="111" width="2" height="3" fill="#5d6f86"/><rect x="173" y="99" width="2" height="2" fill="#d0c8b0"/><rect x="173" y="101" width="2" height="2" fill="#3c5070"/><rect x="173" y="103" width="2" height="3" fill="#c8ccd0"/><rect x="173" y="106" width="2" height="3" fill="#c8ccd0"/><rect x="173" y="109" width="2" height="2" fill="#3c5070"/><rect x="173" y="111" width="2" height="3" fill="#3c5070"/><rect x="175" y="101" width="3" height="5" fill="#f0f0ee"/><rect x="175" y="106" width="3" height="3" fill="#d8d0c0"/><rect x="175" y="109" width="3" height="3" fill="#5d6f86"/><rect x="175" y="112" width="3" height="2" fill="#aeb4b8"/><rect x="178" y="102" width="4" height="3" fill="#d8d0c0"/><rect x="178" y="105" width="4" height="3" fill="#3c5070"/><rect x="178" y="108" width="4" height="2" fill="#c8ccd0"/><rect x="178" y="110" width="4" height="3" fill="#e4e4e0"/><rect x="178" y="113" width="4" height="1" fill="#3c5070"/><rect x="182" y="98" width="3" height="4" fill="#b8c0c8"/><rect x="182" y="102" width="3" height="5" fill="#d8d0c0"/><rect x="182" y="107" width="3" height="5" fill="#e8e0d0"/><rect x="182" y="112" width="3" height="2" fill="#5d6f86"/><rect x="185" y="97" width="3" height="4" fill="#5d6f86"/><rect x="185" y="101" width="3" height="3" fill="#5d6f86"/><rect x="185" y="104" width="3" height="2" fill="#f0f0ee"/><rect x="185" y="106" width="3" height="5" fill="#3c5070"/><rect x="185" y="111" width="3" height="3" fill="#3c5070"/><rect x="188" y="103" width="4" height="5" fill="#e4e4e0"/><rect x="188" y="108" width="4" height="5" fill="#9aa6b2"/><rect x="188" y="113" width="4" height="1" fill="#d8d0c0"/><rect x="192" y="102" width="2" height="2" fill="#3c5070"/><rect x="192" y="104" width="2" height="5" fill="#aeb4b8"/><rect x="192" y="109" width="2" height="3" fill="#c8ccd0"/><rect x="192" y="112" width="2" height="2" fill="#5d6f86"/><rect x="194" y="103" width="3" height="5" fill="#f0f0ee"/><rect x="194" y="108" width="3" height="2" fill="#aeb4b8"/><rect x="194" y="110" width="3" height="3" fill="#aeb4b8"/><rect x="194" y="113" width="3" height="1" fill="#f0f0ee"/><rect x="197" y="98" width="5" height="2" fill="#f0f0ee"/><rect x="197" y="100" width="5" height="3" fill="#f0f0ee"/><rect x="197" y="103" width="5" height="5" fill="#d8d0c0"/><rect x="197" y="108" width="5" height="3" fill="#3c5070"/><rect x="197" y="111" width="5" height="3" fill="#d8d0c0"/><rect x="202" y="102" width="2" height="3" fill="#5d6f86"/><rect x="202" y="105" width="2" height="2" fill="#e8e0d0"/><rect x="202" y="107" width="2" height="3" fill="#aeb4b8"/><rect x="202" y="110" width="2" height="4" fill="#b8c0c8"/><rect x="204" y="102" width="3" height="3" fill="#aeb4b8"/><rect x="204" y="105" width="3" height="2" fill="#aeb4b8"/><rect x="204" y="107" width="3" height="4" fill="#5d6f86"/><rect x="204" y="111" width="3" height="3" fill="#d8d0c0"/><rect x="207" y="102" width="2" height="3" fill="#aeb4b8"/><rect x="207" y="105" width="2" height="2" fill="#b8c0c8"/><rect x="207" y="107" width="2" height="4" fill="#9aa6b2"/><rect x="207" y="111" width="2" height="3" fill="#9aa6b2"/><rect x="209" y="97" width="3" height="5" fill="#aeb4b8"/><rect x="209" y="102" width="3" height="5" fill="#3c5070"/><rect x="209" y="107" width="3" height="5" fill="#3c5070"/><rect x="209" y="112" width="3" height="2" fill="#aeb4b8"/><rect x="212" y="102" width="4" height="3" fill="#e4e4e0"/><rect x="212" y="105" width="4" height="3" fill="#c8ccd0"/><rect x="212" y="108" width="4" height="5" fill="#e8e0d0"/><rect x="212" y="113" width="4" height="1" fill="#f0f0ee"/><rect x="216" y="98" width="2" height="5" fill="#d8d0c0"/><rect x="216" y="103" width="2" height="4" fill="#e8e0d0"/><rect x="216" y="107" width="2" height="3" fill="#aeb4b8"/><rect x="216" y="110" width="2" height="2" fill="#5d6f86"/><rect x="216" y="112" width="2" height="2" fill="#9aa6b2"/><rect x="218" y="102" width="3" height="2" fill="#e8e0d0"/><rect x="218" y="104" width="3" height="3" fill="#e8e0d0"/><rect x="218" y="107" width="3" height="4" fill="#c8ccd0"/><rect x="218" y="111" width="3" height="3" fill="#b8c0c8"/>
<rect x="0" y="110" width="100" height="4" fill="#1f3f78"/><rect x="100" y="112" width="119" height="2" fill="#8c9cae"/>
<rect x="0" y="114" width="219" height="17" fill="url(#wt)"/>
<rect x="56" y="111" width="11" height="4" fill="#f4f6f8"/>
</svg>
<svg style="left:326px;top:399px;overflow:hidden" width="219" height="131" viewBox="0 0 219 131">
<defs><linearGradient id="sk2" x1="0" y1="0" x2="0" y2="1"><stop offset="0" stop-color="#4b88e2"/><stop offset=".4" stop-color="#4f8de2"/><stop offset=".62" stop-color="#78a8ea"/><stop offset=".78" stop-color="#b4d0f2"/><stop offset="1" stop-color="#c8dcf4"/></linearGradient>
<linearGradient id="gr" x1="0" y1="0" x2="0" y2="1"><stop offset="0" stop-color="#6d8a33"/><stop offset=".3" stop-color="#7f9a3f"/><stop offset="1" stop-color="#8ca348"/></linearGradient>
<filter id="cb" x="-20%" y="-50%" width="140%" height="200%"><feGaussianBlur stdDeviation="2.500"/></filter>
<filter id="cb2" x="-20%" y="-50%" width="140%" height="200%"><feGaussianBlur stdDeviation="5"/></filter></defs>
<rect width="219" height="131" fill="url(#sk2)"/>
<g fill="#fff" filter="url(#cb)"><ellipse cx="165" cy="9" rx="38" ry="10"/><ellipse cx="110" cy="4" rx="36" ry="6"/><ellipse cx="170" cy="19" rx="22" ry="6"/><ellipse cx="28" cy="3" rx="22" ry="7"/><ellipse cx="2" cy="18" rx="4" ry="20"/><ellipse cx="211" cy="32" rx="8" ry="7" opacity=".85"/><ellipse cx="84" cy="14" rx="8" ry="4" opacity=".8"/></g>
<g fill="#eef4fc" filter="url(#cb2)"><ellipse cx="34" cy="64" rx="36" ry="6" opacity=".75"/><ellipse cx="40" cy="96" rx="34" ry="9"/><ellipse cx="6" cy="92" rx="10" ry="8" opacity=".8"/></g>
<path d="M6 79H17V101H6Z" fill="#8c9294"/><path d="M6 79H10V101H6Z" fill="#6f7678"/>
<path d="M0 101L64 103.500L219 98V131H0Z" fill="url(#gr)"/>
<path d="M0 100L64 102.500V104L0 102Z" fill="#2f4a20"/>
<path d="M64 77L81 74V60L93 57V47L124 41L145 39L167 46L200 47L218 54V99L131 103.500H64Z" fill="#b4b5b2"/>
<path d="M93 57L124 50L145 48V41L124 41L93 47Z" fill="#bfc0bc"/>
<path d="M145 39L167 46V56L145 48Z" fill="#9b9d9e"/>
<path d="M92 47.500L124 41L145 38.500L168 46" fill="none" stroke="#2a3f98" stroke-width="1.600"/>
<path d="M81 60L143 52V60L81 70Z" fill="#c4c5c0"/>
<path d="M81 70L143 60V64L81 75Z" fill="#8e9092"/>
<path d="M64 77L131 67V104H64Z" fill="#7e8386"/>
<path d="M64 77L131 67V72L64 82Z" fill="#b9bab6"/>
<g stroke="#cdcec9" stroke-width="2.800"><path d="M67 83V103M73.500 82V103M80 81V103M86.500 80V103M93 79V103M99.500 78V103M106 77V103M112.500 76V103M119 75V103"/></g>
<path d="M125 70H143V103H125Z" fill="#b2b3b0"/>
<path d="M143 52L200 47L218 54V60L200 54L143 61Z" fill="#c0c1bd"/>
<path d="M143 61L200 54L218 60V63L200 57.500L143 65Z" fill="#85888a"/>
<path d="M200 57.500L218 63V99L200 99.500Z" fill="#9fa1a2"/>
<g fill="#4f6d80"><rect x="145" y="73" width="3.500" height="9"/><rect x="154" y="72" width="3.500" height="9"/><rect x="164" y="70.500" width="3.500" height="9"/><rect x="175" y="69" width="3.500" height="9"/><rect x="186" y="67" width="4" height="10"/><rect x="145" y="89" width="3.500" height="9"/><rect x="154" y="88.500" width="3.500" height="9"/><rect x="164" y="88" width="3.500" height="9"/><rect x="175" y="87" width="3.500" height="9"/><rect x="186" y="86" width="4" height="10"/></g>
<rect x="200" y="95" width="9" height="4" fill="#3f6a72"/>
<rect x="119" y="82" width="2.500" height="24" fill="#ecece8"/><rect x="117.500" y="81" width="5.500" height="3" fill="#ecece8"/>
<rect x="105" y="41" width="3" height="2.500" fill="#1c2f6e"/>
</svg>
</div>
<svg style="left:2px;top:25px;overflow:hidden" width="153" height="68" viewBox="0 0 153 68">
<defs>
<filter id="fn" x="0" y="0" width="100%" height="100%" color-interpolation-filters="sRGB"><feTurbulence type="fractalNoise" baseFrequency=".2 .14" numOctaves="3" seed="11"/><feColorMatrix type="matrix" values="1.700 0 0 0 -.53  1.700 0 0 0 -.46  1.600 0 0 0 -.56  0 0 0 0 1"/></filter>
<filter id="fb" x="-20%" y="-20%" width="140%" height="140%"><feGaussianBlur stdDeviation="1.200"/></filter>
<radialGradient id="fg1" cx=".5" cy=".5" r=".5"><stop offset="0" stop-color="#eef1ea"/><stop offset="1" stop-color="#eef1ea" stop-opacity="0"/></radialGradient>
<radialGradient id="fg2" cx=".5" cy=".5" r=".5"><stop offset="0" stop-color="#0e160a"/><stop offset="1" stop-color="#0e160a" stop-opacity="0"/></radialGradient>
<radialGradient id="fg3" cx=".5" cy=".5" r=".5"><stop offset="0" stop-color="#8ea858"/><stop offset="1" stop-color="#8ea858" stop-opacity="0"/></radialGradient>
</defs>
<rect width="153" height="68" fill="#55653a"/>
<rect width="153" height="68" filter="url(#fn)"/>
<ellipse cx="10" cy="6" rx="34" ry="20" fill="url(#fg2)"/>
<ellipse cx="24" cy="62" rx="26" ry="9" fill="url(#fg2)" opacity=".8"/>
<ellipse cx="68" cy="36" rx="10" ry="14" fill="url(#fg2)" opacity=".85"/>
<ellipse cx="122" cy="14" rx="16" ry="16" fill="url(#fg2)" opacity=".5"/>
<ellipse cx="9" cy="36" rx="14" ry="14" fill="url(#fg3)" opacity=".8"/>
<ellipse cx="104" cy="36" rx="22" ry="12" fill="url(#fg3)" opacity=".55"/>
<g stroke="#aac070" stroke-width="1.800" fill="none" opacity=".7" filter="url(#fb)"><path d="M41 24L26 8M41 24L34 4M41 24L46 3M41 24L58 10M41 24L62 22M41 24L22 20M41 24L56 32M41 24L30 36M41 24L44 40"/><path d="M8 38L0 26M8 38L16 24M8 38L22 34M8 38L0 44M8 38L20 46"/><path d="M86 48L128 32" stroke="#c8d8a8" stroke-width="3"/></g>
<g stroke="#e6e9ea" stroke-width="3.600" fill="none" opacity=".9" filter="url(#fb)"><path d="M36 38L32 66M48 40L44 66M58 44L56 66M68 50L70 66"/><path d="M94 52L100 66M110 48L116 64M82 56L84 66" stroke="#c8d0d8" stroke-width="6" opacity=".85"/></g>
<g stroke="#10140c" stroke-width="2" fill="none" opacity=".8" filter="url(#fb)"><path d="M42 42L38 66M53 44L50 66M63 44L64 66M70 30L66 50"/></g>
<ellipse cx="92" cy="4" rx="12" ry="8" fill="url(#fg1)"/>
<g stroke="#0e130a" stroke-width="1.600" fill="none" opacity=".85"><path d="M138 22L118 0M138 22L128 0M138 22L136 0M139 22L145 0M138 22L112 18M138 23L118 30" stroke-width="2"/></g>
<path d="M153 0L150 8L144 17L136 22L141 29L143 44L143 68H153Z" fill="#0d0d0a"/>
<path d="M147 36L149 68" stroke="#5a4038" stroke-width="2.500" opacity=".7"/>
</svg>
<!-- vscroll -->
<div style="left:648px;top:25px;width:18px;height:531px;background:linear-gradient(to right,#f3f1ec,#fefefb 70%,#f6f5f0)"></div>
<div style="left:649px;top:25px;width:17px;height:16px;background:linear-gradient(to right,#e1eafe,#c3d3fd 40%,#b7caf5);border-radius:3px;border:1px solid #fff;box-shadow:inset -1px -1px 0 #a0b5e8"><svg style="left:3px;top:4px" width="9" height="7"><path d="M.5 5.500L4.500 1.500L8.500 5.500" fill="none" stroke="#4d6185" stroke-width="2"/></svg></div>
<div style="left:649px;top:42px;width:17px;height:173px;background:linear-gradient(to right,#c9d8fc,#bacdf8 50%,#b0c4f4);border-radius:3px;border:1px solid #fff;box-shadow:inset -1px -1px 0 #a0b5e8"><div style="left:4px;top:82px;width:7px;height:8px;background:repeating-linear-gradient(to bottom,#eef3fe 0 1px,#8ea6dc 1px 2px)"></div></div>
<div style="left:649px;top:540px;width:17px;height:16px;background:linear-gradient(to right,#e1eafe,#c3d3fd 40%,#b7caf5);border-radius:3px;border:1px solid #fff;box-shadow:inset -1px -1px 0 #a0b5e8"><svg style="left:3px;top:4px" width="9" height="7"><path d="M.5 1.500L4.500 5.500L8.500 1.500" fill="none" stroke="#4d6185" stroke-width="2"/></svg></div>
<!-- editor tabs -->
<div style="left:1px;top:556px;width:667px;height:2px;background:#fbfaf5"></div>
<div style="left:57px;top:558px;width:611px;height:1px;background:#000"></div>
<svg style="left:0;top:557px" width="400" height="18"><path d="M-1 .5L6 18H51L57 1.500Z" fill="#fff"/><path d="M-1 .5L6 17.500M51 17.500L57 1.500" fill="none" stroke="#000"/><path d="M57 1.500L60 17.500M103 17.500L109 1.500L114 17.500M204 17.500L210 1.500L215 17.500M305 17.500L311 1.500L316 17.500M366 17.500L372 1.500" fill="none" stroke="#000"/></svg>
<span class="et" style="left:9px;font-weight:bold;letter-spacing:.4px">Design</span>
<span class="et" style="left:65px">Source</span>
<span class="et" style="left:125px">Styles - Design</span>
<span class="et" style="left:225px;letter-spacing:-.15px">Styles - Source</span>
<span class="et" style="left:322px">Preview</span>
</div>
<!-- document tabs + status -->
<div style="left:284px;top:696px;width:692px;height:1px;background:#000"></div><div style="left:76px;top:696px;width:120px;height:1px;background:#000"></div>
<div style="left:4px;top:713px;width:972px;height:1px;background:#aca899"></div>
<div style="left:4px;top:714px;width:972px;height:1px;background:#fff"></div>
<style>.nb{top:696px;width:18px;height:17px;border:1px solid;border-color:#fff #404040 #aca899 #fff;background:#e6e2d2}</style>
<div class="nb" style="left:4px"><svg style="left:3px;top:3px" width="10" height="9"><path d="M.5 0V9M9 0V9L3 4.500Z" fill="#aca899" stroke="#aca899"/></svg></div>
<div class="nb" style="left:22px"><svg style="left:4px;top:3px" width="8" height="9"><path d="M7 0V9L1 4.500Z" fill="#aca899"/></svg></div>
<div class="nb" style="left:40px"><svg style="left:5px;top:3px" width="8" height="9"><path d="M1 0V9L7 4.500Z" fill="#aca899"/></svg></div>
<div class="nb" style="left:58px"><svg style="left:3px;top:3px" width="10" height="9"><path d="M9.500 0V9M1 0V9L7 4.500Z" fill="#aca899" stroke="#aca899"/></svg></div>
<svg style="left:76px;top:696px" width="220" height="18"><path d="M114 0L120 17H202L209 0Z" fill="#fff"/><path d="M0 .5L7 17H110M110 17L114 .5L120 17H202L209 .5" fill="none" stroke="#000"/></svg>
<span style="left:95px;top:698px;font:11px/13px 'Liberation Sans',sans-serif;letter-spacing:-.2px">Project: Contents</span>
<span style="left:200px;top:698px;font:bold 11px/13px 'Liberation Sans',sans-serif;letter-spacing:.38px">auckland.htm</span>
<span style="left:5px;top:717px;font:11px/13px 'Liberation Sans',sans-serif;letter-spacing:-.2px">For Help, press F1</span>
<div class="vs" style="left:797px;top:717px;height:13px"></div>
<div class="vs" style="left:955px;top:717px;height:13px"></div>
</div>
</body>
</html>
